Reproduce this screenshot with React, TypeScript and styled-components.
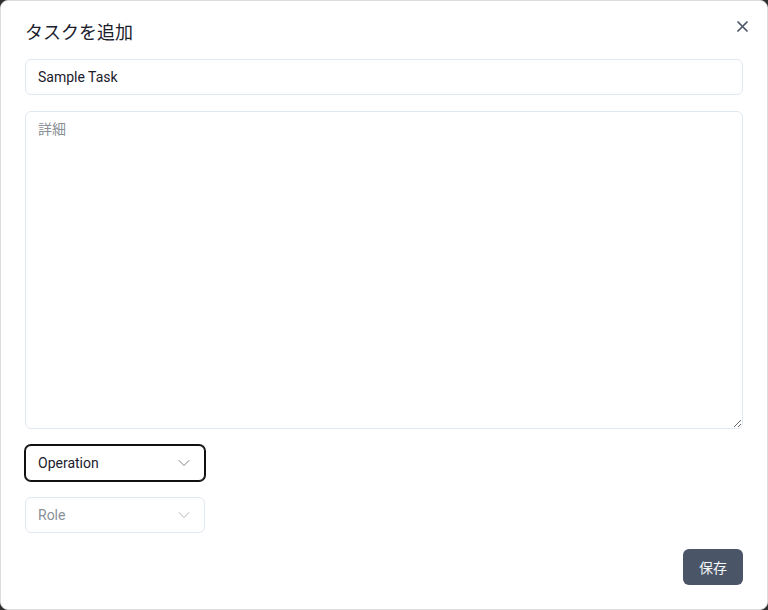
import React from "react";
import styled, { createGlobalStyle } from "styled-components";

const Global = createGlobalStyle`
  html, body {
    margin: 0;
    padding: 0;
    background: #2f2f2f;
  }
  * { box-sizing: border-box; }
  body {
    font-family: Roboto, "Noto Sans CJK JP", sans-serif;
    color: #1a202c;
  }
`;

const Dialog = styled.section`
  position: relative;
  width: 768px;
  height: 610px;
  background: #ffffff;
  border: 1px solid #dcdcdc;
  border-radius: 8px;
  padding: 18px 24px 24px;
  display: flex;
  flex-direction: column;
`;

const Title = styled.h2`
  margin: 0 0 12px;
  font-size: 18px;
  line-height: 28px;
  font-weight: 400;
  color: #1a202c;
`;

const CloseButton = styled.button`
  position: absolute;
  top: 9px;
  right: 9px;
  width: 32px;
  height: 32px;
  border: none;
  background: transparent;
  display: flex;
  align-items: center;
  justify-content: center;
  padding: 0;
  cursor: pointer;
  color: #4a5568;
`;

const Form = styled.div`
  display: flex;
  flex-direction: column;
  gap: 16px;
  flex: 1;
`;

const TextInput = styled.input`
  width: 100%;
  height: 36px;
  padding: 0 12px;
  border: 1px solid #e2e8f0;
  border-radius: 6px;
  font-family: inherit;
  font-size: 14px;
  color: #1a202c;
  outline: none;
  background: #fff;
`;

const Details = styled.textarea`
  width: 100%;
  height: 318px;
  padding: 7px 12px;
  border: 1px solid #e2e8f0;
  border-radius: 6px;
  font-family: inherit;
  font-size: 14px;
  line-height: 20px;
  color: #1a202c;
  outline: none;
  resize: vertical;
  display: block;
  &::placeholder { color: #8a8f98; }
`;

const SelectBox = styled.div<{ $focused?: boolean; $placeholder?: boolean }>`
  width: 180px;
  height: 36px;
  padding: 0 14px 0 12px;
  display: flex;
  align-items: center;
  justify-content: space-between;
  border: 1px solid ${(p) => (p.$focused ? "#111111" : "#e2e8f0")};
  box-shadow: ${(p) => (p.$focused ? "0 0 0 1px #111111" : "none")};
  border-radius: 6px;
  font-size: 14px;
  color: ${(p) => (p.$placeholder ? "#8a8f98" : "#1a202c")};
  background: #fff;
`;

const Chevron = styled.svg<{ $muted?: boolean }>`
  width: 12px;
  height: 12px;
  color: ${(p) => (p.$muted ? "#b0b5bd" : "#7a808a")};
`;

const Footer = styled.div`
  margin-top: auto;
  display: flex;
  justify-content: flex-end;
`;

const SaveButton = styled.button`
  width: 60px;
  height: 36px;
  border: none;
  border-radius: 6px;
  background: #4a5568;
  color: #f4f6f8;
  font-family: inherit;
  font-size: 14px;
  cursor: pointer;
`;

const ChevronDown = ({ muted }: { muted?: boolean }) => (
  <Chevron $muted={muted} viewBox="0 0 12 12" fill="none">
    <path d="M1 3.5 6 8.5 11 3.5" stroke="currentColor" strokeWidth="1" strokeLinecap="round" strokeLinejoin="round" />
  </Chevron>
);

export default function App() {
  return (
    <>
      <Global />
      <Dialog>
        <Title>タスクを追加</Title>
        <CloseButton aria-label="閉じる">
          <svg width="11" height="11" viewBox="0 0 11 11" fill="none">
            <path d="M1 1l9 9M10 1l-9 9" stroke="currentColor" strokeWidth="1.7" strokeLinecap="round" />
          </svg>
        </CloseButton>
        <Form>
          <TextInput defaultValue="Sample Task" />
          <Details placeholder="詳細" />
          <SelectBox $focused>
            <span>Operation</span>
            <ChevronDown />
          </SelectBox>
          <SelectBox $placeholder>
            <span>Role</span>
            <ChevronDown muted />
          </SelectBox>
        </Form>
        <Footer>
          <SaveButton>保存</SaveButton>
        </Footer>
      </Dialog>
    </>
  );
}
